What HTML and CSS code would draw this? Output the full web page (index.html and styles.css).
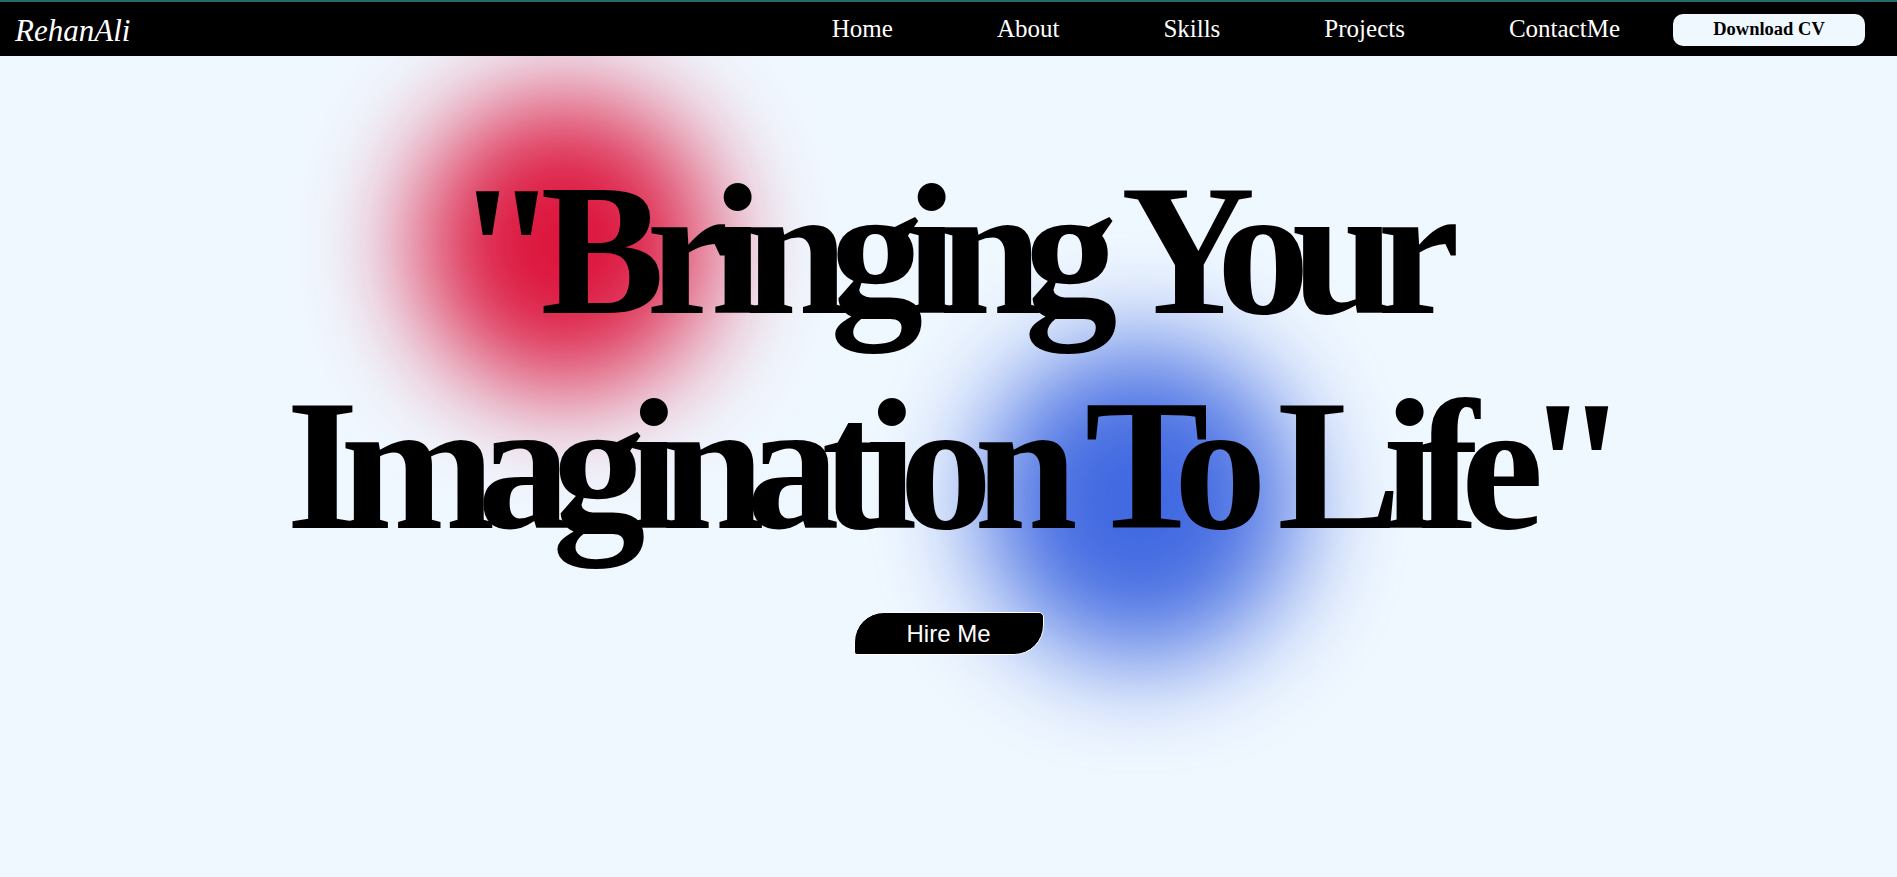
FILE: index.html
```html
<!DOCTYPE html>
<html lang="en">
<head>
<meta charset="utf-8">
<title>RehanAli</title>
<link rel="stylesheet" href="styles.css">
</head>
<body>
<nav class="navbar">
  <div class="logo">RehanAli</div>
  <div class="nav-right">
    <ul class="nav-links">
      <li><a href="#">Home</a></li>
      <li><a href="#">About</a></li>
      <li><a href="#">Skills</a></li>
      <li><a href="#">Projects</a></li>
      <li><a href="#">ContactMe</a></li>
    </ul>
    <button class="cv-btn">Download CV</button>
  </div>
</nav>
<main class="hero">
  <div class="blob blob-red"></div>
  <div class="blob blob-blue"></div>
  <h1 class="headline">"Bringing Your<br>Imagination To Life"</h1>
  <button class="hire-btn">Hire Me</button>
</main>
</body>
</html>
```
FILE: styles.css
```css
* { box-sizing: border-box; }

html, body {
  margin: 0;
  padding: 0;
}

body {
  background: #f0f8ff;
  font-family: "Liberation Serif", "Times New Roman", serif;
  min-height: 877px;
  overflow: hidden;
}

.navbar {
  position: relative;
  z-index: 5;
  display: flex;
  align-items: center;
  justify-content: space-between;
  height: 56px;
  background: #000;
  border-top: 2px solid #226c6c;
}

.logo {
  padding-left: 15px;
  color: #fff;
  font-style: italic;
  font-size: 31px;
  line-height: 1;
  padding-top: 2px;
}

.nav-right {
  display: flex;
  align-items: center;
  gap: 53px;
  padding-right: 32px;
}

.nav-links {
  display: flex;
  gap: 104px;
  list-style: none;
  margin: 0;
  padding: 0;
}

.nav-links a {
  color: #fff;
  text-decoration: none;
  font-size: 25px;
}

.cv-btn {
  width: 192px;
  height: 32px;
  border: none;
  border-radius: 10px;
  background: #f0f8ff;
  color: #000;
  font-family: "Liberation Serif", "Times New Roman", serif;
  font-weight: bold;
  font-size: 18.5px;
  padding: 0;
  margin-top: 1px;
}

.hero {
  position: relative;
  display: flex;
  flex-direction: column;
  align-items: center;
  padding-top: 87px;
}

.blob {
  position: absolute;
  border-radius: 50%;
  z-index: 0;
}

.blob-red {
  left: 416px;
  top: 40px;
  width: 296px;
  height: 296px;
  background: #dc143c;
  filter: blur(56px);
}

.blob-blue {
  left: 982px;
  top: 288px;
  width: 316px;
  height: 316px;
  background: #4169e1;
  filter: blur(54px);
}

.headline {
  position: relative;
  z-index: 1;
  margin: 0;
  text-align: center;
  font-family: "Liberation Serif", "Times New Roman", serif;
  font-weight: bold;
  font-size: 186px;
  line-height: 215px;
  letter-spacing: -18px;
  color: #000;
}

.hire-btn {
  position: relative;
  z-index: 1;
  margin-top: 39px;
  width: 190px;
  height: 43px;
  background: #000;
  color: #fff;
  border: 1px solid #fff;
  border-radius: 30px 5px 30px 3px;
  font-family: "Liberation Sans", Arial, sans-serif;
  font-size: 24px;
  padding: 0;
}
```
